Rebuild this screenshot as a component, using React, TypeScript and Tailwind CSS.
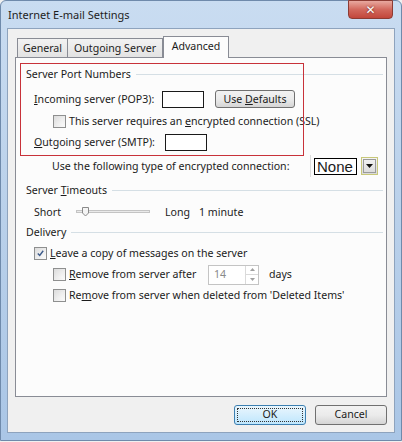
import React from 'react';

function Check({ checked = false }: { checked?: boolean }) {
  return (
    <div className="w-[13px] h-[13px] border border-[#8e8f8f] bg-gradient-to-br from-[#dcdcdc] to-[#fbfbfb] p-[2px] shrink-0">
      <div className="w-full h-full bg-gradient-to-br from-[#e2e2e2] to-[#f8f8f8] flex items-center justify-center">
        {checked && (
          <svg width="9" height="9" viewBox="0 0 9 9">
            <path d="M1 4.5 L3.5 7 L8 1" stroke="#3c5a8a" strokeWidth="1.8" fill="none" />
          </svg>
        )}
      </div>
    </div>
  );
}

function GroupTitle({ children }: { children: React.ReactNode }) {
  return (
    <div className="flex items-center gap-[5px] pl-[10px] pr-[3px]">
      <span className="whitespace-nowrap">{children}</span>
      <div className="flex-1 border-t border-[#d5dfe5]" />
    </div>
  );
}

function WinButton({ children, focused = false }: { children: React.ReactNode; focused?: boolean }) {
  return (
    <div
      className={`w-[72px] h-[20px] rounded-[3px] border flex items-center justify-center ${
        focused
          ? 'border-[#3c7fb1] bg-gradient-to-b from-[#eaf6fd] to-[#bee6fd]'
          : 'border-[#707070] bg-gradient-to-b from-[#f2f2f2] via-[#ebebeb] to-[#d5d5d5]'
      }`}
    >
      {children}
    </div>
  );
}

export default function App() {
  return (
    <div className="w-[402px] h-[442px] bg-[#f0f0f0] font-['Noto_Sans',sans-serif] text-[10.6px] text-[#1b1b1b] leading-none whitespace-nowrap">
      <div className="w-[402px] h-[441px] rounded-t-[6px] border border-[#6f8aab] bg-gradient-to-b from-[#c9dcf1] via-[#b9d0ea] to-[#aac6e6] flex flex-col relative">
        {/* title bar */}
        <div className="h-[27px] flex items-center pl-[7px] text-[11px] text-[#1e1e1e] shrink-0">
          Internet E-mail Settings
        </div>
        <div className="absolute right-[8px] top-[-1px] w-[45px] h-[19px] rounded-b-[4px] border border-[#8d3b33] bg-gradient-to-b from-[#e8a89f] via-[#d2685d] to-[#c2463b] flex items-center justify-center">
          <span className="text-white font-['DejaVu_Sans',sans-serif] font-bold text-[12px] [text-shadow:0_0_2px_#5a1c16]">✕</span>
        </div>

        {/* client */}
        <div className="mx-[6px] mb-[7px] flex-1 border border-[#8ea3bd] bg-[#f0f0f0] flex flex-col pl-[7px] pr-[7px]">
          {/* tabs */}
          <div className="h-[28px] flex items-end pl-[2px] shrink-0">
            <div className="h-[19px] w-[51px] border border-b-0 border-[#898c95] bg-gradient-to-b from-[#f2f2f2] to-[#e3e3e3] flex items-center justify-center">General</div>
            <div className="h-[19px] w-[95px] border border-b-0 border-l-0 border-[#898c95] bg-gradient-to-b from-[#f2f2f2] to-[#e3e3e3] flex items-center justify-center">Outgoing Server</div>
            <div className="h-[22px] w-[66px] border border-b-0 border-[#898c95] bg-[#fcfcfc] flex items-center justify-center mb-[-1px] relative z-10 pb-[3px]">Advanced</div>
          </div>

          {/* panel */}
          <div className="h-[340px] border border-[#898c95] bg-[#fcfcfc] flex flex-col pt-[5px] relative">
            <div className="h-[23px] flex flex-col justify-center">
              <GroupTitle>Server Port Numbers</GroupTitle>
            </div>
            <div className="h-[26px] flex items-center pl-[18px]">
              <span className="w-[128px]"><u>I</u>ncoming server (POP3):</span>
              <div className="w-[42px] h-[17px] border border-[#1a1a1a] bg-white" />
              <div className="ml-[11px] w-[80px] h-[18px] rounded-[3px] border border-[#707070] bg-gradient-to-b from-[#f2f2f2] via-[#ebebeb] to-[#d5d5d5] flex items-center justify-center">
                <span>Use <u>D</u>efaults</span>
              </div>
            </div>
            <div className="h-[19px] flex items-center pl-[37px] gap-[3px]">
              <Check />
              <span>This server requires an <u>e</u>ncrypted connection (SSL)</span>
            </div>
            <div className="h-[23px] flex items-center pl-[18px]">
              <span className="w-[131px]"><u>O</u>utgoing server (SMTP):</span>
              <div className="w-[42px] h-[17px] border border-[#1a1a1a] bg-white" />
            </div>
            <div className="h-[24px] flex items-center pl-[36px]">
              <span className="w-[258px]">Use the following type of encrypted connection:</span>
              <div className="w-px h-[22px] bg-[#dcdcdc]" />
              <div className="ml-[3px] w-[43px] h-[17px] border border-black bg-white flex items-center pl-[2px] font-['Liberation_Sans',sans-serif] text-[15px]">None</div>
              <div className="ml-[4px] w-[17px] h-[18px] border border-[#c8c87a] bg-gradient-to-b from-[#f4f4f4] to-[#d9d9d9] flex items-center justify-center p-[1px]">
                <div className="w-full h-full border border-[#9a9a9a] flex items-center justify-center">
                  <svg width="7" height="4" viewBox="0 0 7 4"><path d="M0 0 H7 L3.5 4 Z" fill="#111" /></svg>
                </div>
              </div>
            </div>
            <div className="h-[24px] flex flex-col justify-center">
              <GroupTitle>Server <u>T</u>imeouts</GroupTitle>
            </div>
            <div className="h-[20px] flex items-center pl-[18px]">
              <span className="w-[42px]">Short</span>
              <div className="w-[74px] h-[10px] relative">
                <div className="absolute left-0 right-0 top-[3px] h-[3px] border border-[#c4c4c4] bg-[#eaeaea]" />
                <svg className="absolute left-[6px] top-0" width="7" height="10" viewBox="0 0 7 10">
                  <path d="M0.5 0.5 H6.5 V6 L3.5 9 L0.5 6 Z" fill="#f4f4f4" stroke="#8a8a8a" />
                </svg>
              </div>
              <span className="ml-[15px]">Long</span>
              <span className="ml-[9px]">1 minute</span>
            </div>
            <div className="h-[20px] flex flex-col justify-center">
              <GroupTitle>Delivery</GroupTitle>
            </div>
            <div className="h-[23px] flex items-center pl-[18px] gap-[3px]">
              <Check checked />
              <span><u>L</u>eave a copy of messages on the server</span>
            </div>
            <div className="h-[19px] flex items-center pl-[37px]">
              <Check />
              <span className="ml-[3px] w-[139px]"><u>R</u>emove from server after</span>
              <div className="w-[51px] h-[20px] border border-[#c4c4c4] bg-white flex items-center">
                <span className="flex-1 pl-[5px] text-[#8a8a8a]">14</span>
                <div className="w-[13px] h-full flex flex-col border-l border-[#dadada]">
                  <div className="flex-1 flex items-center justify-center border-b border-[#dadada]">
                    <svg width="5" height="3" viewBox="0 0 5 3"><path d="M0 3 L2.5 0 L5 3 Z" fill="#a0a0a0" /></svg>
                  </div>
                  <div className="flex-1 flex items-center justify-center">
                    <svg width="5" height="3" viewBox="0 0 5 3"><path d="M0 0 L2.5 3 L5 0 Z" fill="#a0a0a0" /></svg>
                  </div>
                </div>
              </div>
              <span className="ml-[10px]">days</span>
            </div>
            <div className="h-[23px] flex items-center pl-[37px] gap-[3px]">
              <Check />
              <span>Re<u>m</u>ove from server when deleted from 'Deleted Items'</span>
            </div>

            {/* highlight annotation */}
            <div className="absolute left-[4px] top-[5px] w-[284px] h-[93px] border border-[#c8323a] pointer-events-none" />
          </div>

          {/* buttons */}
          <div className="flex-1 flex items-center justify-end gap-[9px]">
            <WinButton focused>
              <div className="w-[66px] h-[14px] border border-dotted border-[#333] flex items-center justify-center">OK</div>
            </WinButton>
            <WinButton>Cancel</WinButton>
          </div>
        </div>
      </div>
    </div>
  );
}
